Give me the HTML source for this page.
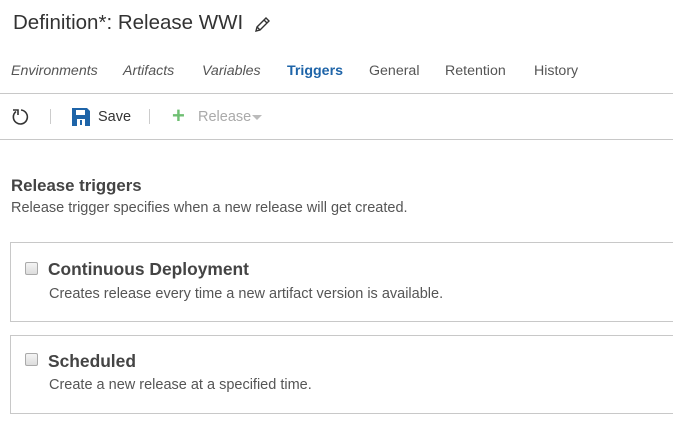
<!DOCTYPE html>
<html><head><style>
body{margin:0;width:673px;height:434px;background:#fff;font-family:"Liberation Sans",sans-serif;position:relative;overflow:hidden;color:#333}
.a{position:absolute;white-space:nowrap}
.tab{top:63px;font-size:14.2px;color:#555;font-style:italic}
.tab2{top:63px;font-size:14.2px;color:#555}
.line{position:absolute;left:0;width:673px;height:1px;background:#c8c8c8}
.box{position:absolute;left:10px;width:680px;border:1px solid #c8c8c8;box-sizing:border-box}
.cb{position:absolute;left:14px;width:11px;height:11px;border:1px solid #aaa;border-radius:2px;background:linear-gradient(#f4f4f4,#ddd)}
.h{position:absolute;left:37px;font-size:17.4px;font-weight:bold;color:#444}
.d{position:absolute;left:38px;font-size:14.5px;color:#555}
</style></head><body>
<div class="a" style="left:13px;top:11px;font-size:20.5px;color:#333">Definition*: Release WWI</div>
<svg class="a" style="left:253px;top:16px" width="18" height="18" viewBox="0 0 18 18"><path d="M3 15l1-4L13 2l3 3-9 9z M4 11l3 3 M11 4l3 3" fill="none" stroke="#333" stroke-width="1.4"/></svg>
<div class="a tab" style="left:11px">Environments</div>
<div class="a tab" style="left:123px">Artifacts</div>
<div class="a tab" style="left:202px">Variables</div>
<div class="a" style="left:287px;top:63px;font-size:14.2px;font-weight:bold;color:#1e64a8">Triggers</div>
<div class="a tab2" style="left:369px">General</div>
<div class="a tab2" style="left:445px">Retention</div>
<div class="a tab2" style="left:534px">History</div>
<div class="line" style="top:93px"></div>
<svg class="a" style="left:10px;top:107px" width="20" height="20" viewBox="0 0 20 20"><path d="M6 4.5A7 7 0 1 0 11 3" fill="none" stroke="#333" stroke-width="1.6"/><path d="M3 3h5v5" fill="none" stroke="#333" stroke-width="1.6"/></svg>
<div class="a" style="left:50px;top:109px;width:1px;height:15px;background:#ccc"></div>
<svg class="a" style="left:72px;top:108px" width="18" height="18" viewBox="0 0 18 18"><path d="M0 0h15l3 3v15H0z" fill="#1e64a8"/><rect x="4" y="2" width="9" height="5" fill="#fff"/><rect x="5" y="11" width="8" height="7" fill="#fff"/><rect x="8" y="12" width="2" height="5" fill="#1e64a8"/></svg>
<div class="a" style="left:98px;top:109px;font-size:14.5px;color:#333">Save</div>
<div class="a" style="left:149px;top:109px;width:1px;height:15px;background:#ccc"></div>
<div class="a" style="left:172px;top:103px;font-size:22px;color:#6fbf73;font-weight:bold">+</div>
<div class="a" style="left:198px;top:109px;font-size:14.5px;color:#aaa">Release</div>
<div class="a" style="left:252px;top:115px;width:0;height:0;border-left:5px solid transparent;border-right:5px solid transparent;border-top:5px solid #bbb"></div>
<div class="line" style="top:139px"></div>
<div class="a" style="left:11px;top:176px;font-size:16.8px;font-weight:bold;color:#444">Release triggers</div>
<div class="a" style="left:11px;top:200px;font-size:14.5px;color:#555">Release trigger specifies when a new release will get created.</div>
<div class="box" style="top:242px;height:80px"><div class="cb" style="top:19px"></div><div class="h" style="top:16px">Continuous Deployment</div><div class="d" style="top:43px">Creates release every time a new artifact version is available.</div></div>
<div class="box" style="top:335px;height:79px"><div class="cb" style="top:17px"></div><div class="h" style="top:15px">Scheduled</div><div class="d" style="top:41px">Create a new release at a specified time.</div></div>
</body></html>
